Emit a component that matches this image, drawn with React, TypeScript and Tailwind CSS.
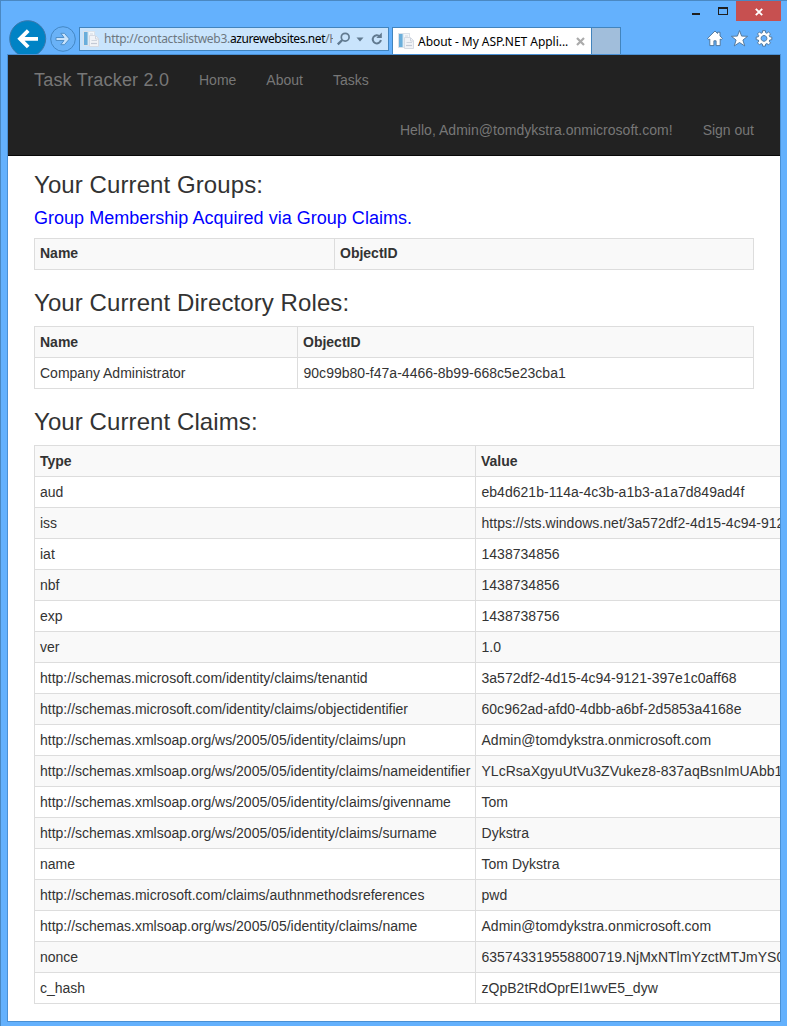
import React from "react";

type Row = [string, string];

const roles: Row[] = [["Company Administrator", "90c99b80-f47a-4466-8b99-668c5e23cba1"]];

const claims: Row[] = [
  ["aud", "eb4d621b-114a-4c3b-a1b3-a1a7d849ad4f"],
  ["iss", "https://sts.windows.net/3a572df2-4d15-4c94-9121-397e1c0aff68/"],
  ["iat", "1438734856"],
  ["nbf", "1438734856"],
  ["exp", "1438738756"],
  ["ver", "1.0"],
  ["http://schemas.microsoft.com/identity/claims/tenantid", "3a572df2-4d15-4c94-9121-397e1c0aff68"],
  ["http://schemas.microsoft.com/identity/claims/objectidentifier", "60c962ad-afd0-4dbb-a6bf-2d5853a4168e"],
  ["http://schemas.xmlsoap.org/ws/2005/05/identity/claims/upn", "Admin@tomdykstra.onmicrosoft.com"],
  ["http://schemas.xmlsoap.org/ws/2005/05/identity/claims/nameidentifier", "YLcRsaXgyuUtVu3ZVukez8-837aqBsnImUAbb1"],
  ["http://schemas.xmlsoap.org/ws/2005/05/identity/claims/givenname", "Tom"],
  ["http://schemas.xmlsoap.org/ws/2005/05/identity/claims/surname", "Dykstra"],
  ["name", "Tom Dykstra"],
  ["http://schemas.microsoft.com/claims/authnmethodsreferences", "pwd"],
  ["http://schemas.xmlsoap.org/ws/2005/05/identity/claims/name", "Admin@tomdykstra.onmicrosoft.com"],
  ["nonce", "635743319558800719.NjMxNTlmYzctMTJmYS0"],
  ["c_hash", "zQpB2tRdOprEI1wvE5_dyw"],
];

function PageIcon() {
  return (
    <svg width="16" height="16" viewBox="0 0 16 16" className="shrink-0">
      <rect x="0.5" y="0.5" width="11" height="14" fill="#f4f7fa" stroke="#dbe2ea" />
      <rect x="1" y="1" width="4" height="13" fill="#6aaedb" />
      <rect x="4.5" y="1" width="1" height="13" fill="#c9dfee" />
      <path d="M7 3h3" stroke="#d3d8e0" />
      <path d="M6.5 4.5h6l3 3v8h-9z" fill="#f1f3f7" stroke="#d6dbe3" />
      <path d="M8 12.5h6" stroke="#c3c9d6" strokeWidth="1.2" />
      <path d="M8.5 9.5h5.5M12.5 5v3h3" fill="none" stroke="#cfd5de" />
    </svg>
  );
}

function TitleBar() {
  return (
    <div className="flex h-[26px] items-start justify-end pr-[6px]">
      <svg width="44" height="20" viewBox="0 0 44 20" shapeRendering="crispEdges">
        <rect x="0" y="12" width="8" height="2" fill="#1f1f1f" />
        <path d="M26 6h10v8H26zM27 8v5h8V8z" fill="#1f1f1f" fillRule="evenodd" />
      </svg>
      <div className="flex h-5 w-[45px] items-center justify-center bg-[#c75050]">
        <svg width="8" height="8" viewBox="0 0 8 8" className="mt-0.5">
          <path d="M0.8 0.8l6.4 6.4M7.2 0.8L0.8 7.2" stroke="#fff" strokeWidth="1.9" />
        </svg>
      </div>
    </div>
  );
}

function Toolbar() {
  return (
    <div className="flex h-[27px] items-start font-['Noto_Sans','Liberation_Sans',sans-serif] text-[12px]">
      <svg width="38" height="34" viewBox="0 0 38 34" className="-mt-[7px] ml-[8px] shrink-0">
        <circle cx="18.7" cy="18.7" r="18" fill="#0083c5" stroke="#3c78ab" />
        <path d="M29 18.8H11.5M19.2 10.6L11 18.8l8.2 8.2" fill="none" stroke="#fff" strokeWidth="3.8" />
      </svg>
      <svg width="26" height="26" viewBox="0 0 26 26" className="-mt-px ml-[3px] shrink-0">
        <circle cx="13" cy="13" r="12.3" fill="#6ab2f7" stroke="#4487c4" />
        <path d="M6 11.5h8l-3.2-4.2h3.6l5 5.7-5 5.7h-3.6l3.2-4.2H6z" fill="#c9e3fb" stroke="#4f8fc9" strokeWidth="1" />
      </svg>
      <div className="ml-[3px] flex h-6 w-[310px] shrink-0 items-center border border-[#4284bd] bg-[#c9e4fc] pl-[3px]">
        <PageIcon />
        <span className="ml-[5px] w-[229px] shrink-0 overflow-hidden whitespace-nowrap leading-[20px] tracking-[-0.29px] text-[#6d7780]">
          http://contactslistweb3.<span className="tracking-[-0.4px] text-black">azurewebsites.net</span>/Home
        </span>
        <svg width="52" height="16" viewBox="0 0 52 16" className="ml-[3px] shrink-0">
          <circle cx="9.2" cy="6.2" r="3.9" fill="none" stroke="#617a90" strokeWidth="1.7" />
          <path d="M6.3 9L1.8 13.4" stroke="#617a90" strokeWidth="2.4" />
          <path d="M20.5 6.5h7L24 10.5z" fill="#617a90" />
          <path d="M43.8 5.4A4.1 4.1 0 1 0 44.9 9" fill="none" stroke="#617a90" strokeWidth="2" />
          <path d="M45.8 1.5V7h-5.5z" fill="#617a90" />
        </svg>
      </div>
      <div className="ml-[3px] flex h-[27px] w-[200px] shrink-0 items-center border border-b-0 border-[#4284bd] bg-white pl-[5px]">
        <PageIcon />
        <span className="ml-[4px] w-[152px] whitespace-nowrap pt-px leading-[20px] tracking-[-0.04px] text-black">About - My ASP.NET Appli...</span>
        <svg width="9" height="9" viewBox="0 0 9 9" className="ml-[6px] shrink-0">
          <path d="M1 1l7 7M8 1L1 8" stroke="#ababab" strokeWidth="2.2" />
        </svg>
      </div>
      <div className="h-[27px] w-[29px] shrink-0 border-r border-t border-[#4284bd] bg-[#a1bedb]" />
      <svg width="66" height="18" viewBox="0 0 66 18" className="ml-[86px] mt-[2.5px] shrink-0" stroke="#4a7095" strokeWidth="0.9" fill="#fff">
        <path d="M8 1L.6 8.3l1.2 1.5 1-.8v6.6h4.1v-4.8h2.2v4.8h4.1V9l1 .8 1.2-1.5L13 6V2.2h-2.5v1.3z" />
        <path d="M32.5.5l2.1 5.6 6 .2-4.7 3.7 1.8 5.9-5.2-3.4-5.2 3.4 1.8-5.9-4.7-3.7 6-.2z" />
        <g transform="translate(57 8.3)">
          <path
            fillRule="evenodd"
            d="M-1.4-7.6h2.8l.3 2.1 1.1.5 1.8-1.3 1.9 1.9-1.3 1.8.5 1.1 2.1.3v2.6l-2.1.3-.5 1.1 1.3 1.8-1.9 1.9-1.8-1.3-1.1.5-.3 2.1h-2.8l-.3-2.1-1.1-.5-1.8 1.3-1.9-1.9 1.3-1.8-.5-1.1-2.1-.3v-2.6l2.1-.3.5-1.1-1.3-1.8 1.9-1.9 1.8 1.3 1.1-.5zM0-2.8a2.9 2.9 0 1 0 .01 0z"
          />
        </g>
      </svg>
    </div>
  );
}

function NavBar() {
  return (
    <nav className="h-[101px] border-b border-[#080808] bg-[#222] px-[26px] text-[14px] leading-[20px] text-[#777]">
      <div className="flex h-[50px] items-center">
        <span className="w-[135px] whitespace-nowrap text-[18px] tracking-[0.19px]">Task Tracker 2.0</span>
        <span className="ml-[30px]">Home</span>
        <span className="ml-[30px]">About</span>
        <span className="ml-[30px]">Tasks</span>
      </div>
      <div className="flex h-[50px] items-center justify-end">
        <span className="tracking-[0.025px]">Hello, Admin@tomdykstra.onmicrosoft.com!</span>
        <span className="ml-[30px]">Sign out</span>
      </div>
    </nav>
  );
}

interface TableProps {
  head: Row;
  rows: Row[];
  size: string;
  first: string;
  headPad?: string;
}

function DataTable({ head, rows, size, first, headPad = "" }: TableProps) {
  return (
    <table className={`${size} table-fixed border-separate border-spacing-0 whitespace-nowrap border-l border-t border-[#ddd] text-[14px] leading-[20px]`}>
      <tbody>
        <tr className="bg-[#f9f9f9]">
          {head.map((label, i) => (
            <th key={label} className={`${i === 0 ? first : ""} ${headPad} h-[31px] border-b border-r border-[#ddd] px-[5px] pt-0 text-left font-bold`}>
              {label}
            </th>
          ))}
        </tr>
        {rows.map((row) => (
          <tr key={row[0]} className="even:bg-white odd:bg-[#f9f9f9]">
            {row.map((cell, i) => (
              <td key={i} className="h-[31px] border-b border-r border-[#ddd] p-0 pl-[5px] last:pl-[5.5px] last:tracking-[0.02px]">
                {cell}
              </td>
            ))}
          </tr>
        ))}
      </tbody>
    </table>
  );
}

function Heading({ children }: { children: React.ReactNode }) {
  return <h3 className="mb-[10px] h-[26px] text-[24px] leading-[26px] tracking-[0.09px]">{children}</h3>;
}

export default function App() {
  return (
    <div className="h-[1026px] w-[787px] overflow-hidden border-l border-t border-[#4a88c2] bg-[#64b1fd] font-['Liberation_Sans',Arial,sans-serif]">
      <TitleBar />
      <Toolbar />
      <div className="ml-[6px] h-[968px] w-[774px] overflow-hidden border border-[#4a90d4] bg-white text-[#333]">
        <NavBar />
        <main className="flex flex-col gap-5 pl-[26px] pt-4">
          <section>
            <Heading>Your Current Groups:</Heading>
            <h4 className="mb-[10px] h-5 text-[18px] leading-[20px] tracking-[0.02px] text-[#0000ff]">Group Membership Acquired via Group Claims.</h4>
            <DataTable head={["Name", "ObjectID"]} rows={[]} size="w-[720px]" first="w-[300px]" headPad="pb-[2px]" />
          </section>
          <section>
            <Heading>Your Current Directory Roles:</Heading>
            <DataTable head={["Name", "ObjectID"]} rows={roles} size="w-[720px]" first="w-[263px]" />
          </section>
          <section>
            <Heading>Your Current Claims:</Heading>
            <DataTable head={["Type", "Value"]} rows={claims} size="w-[960px]" first="w-[441px]" />
          </section>
        </main>
      </div>
    </div>
  );
}
